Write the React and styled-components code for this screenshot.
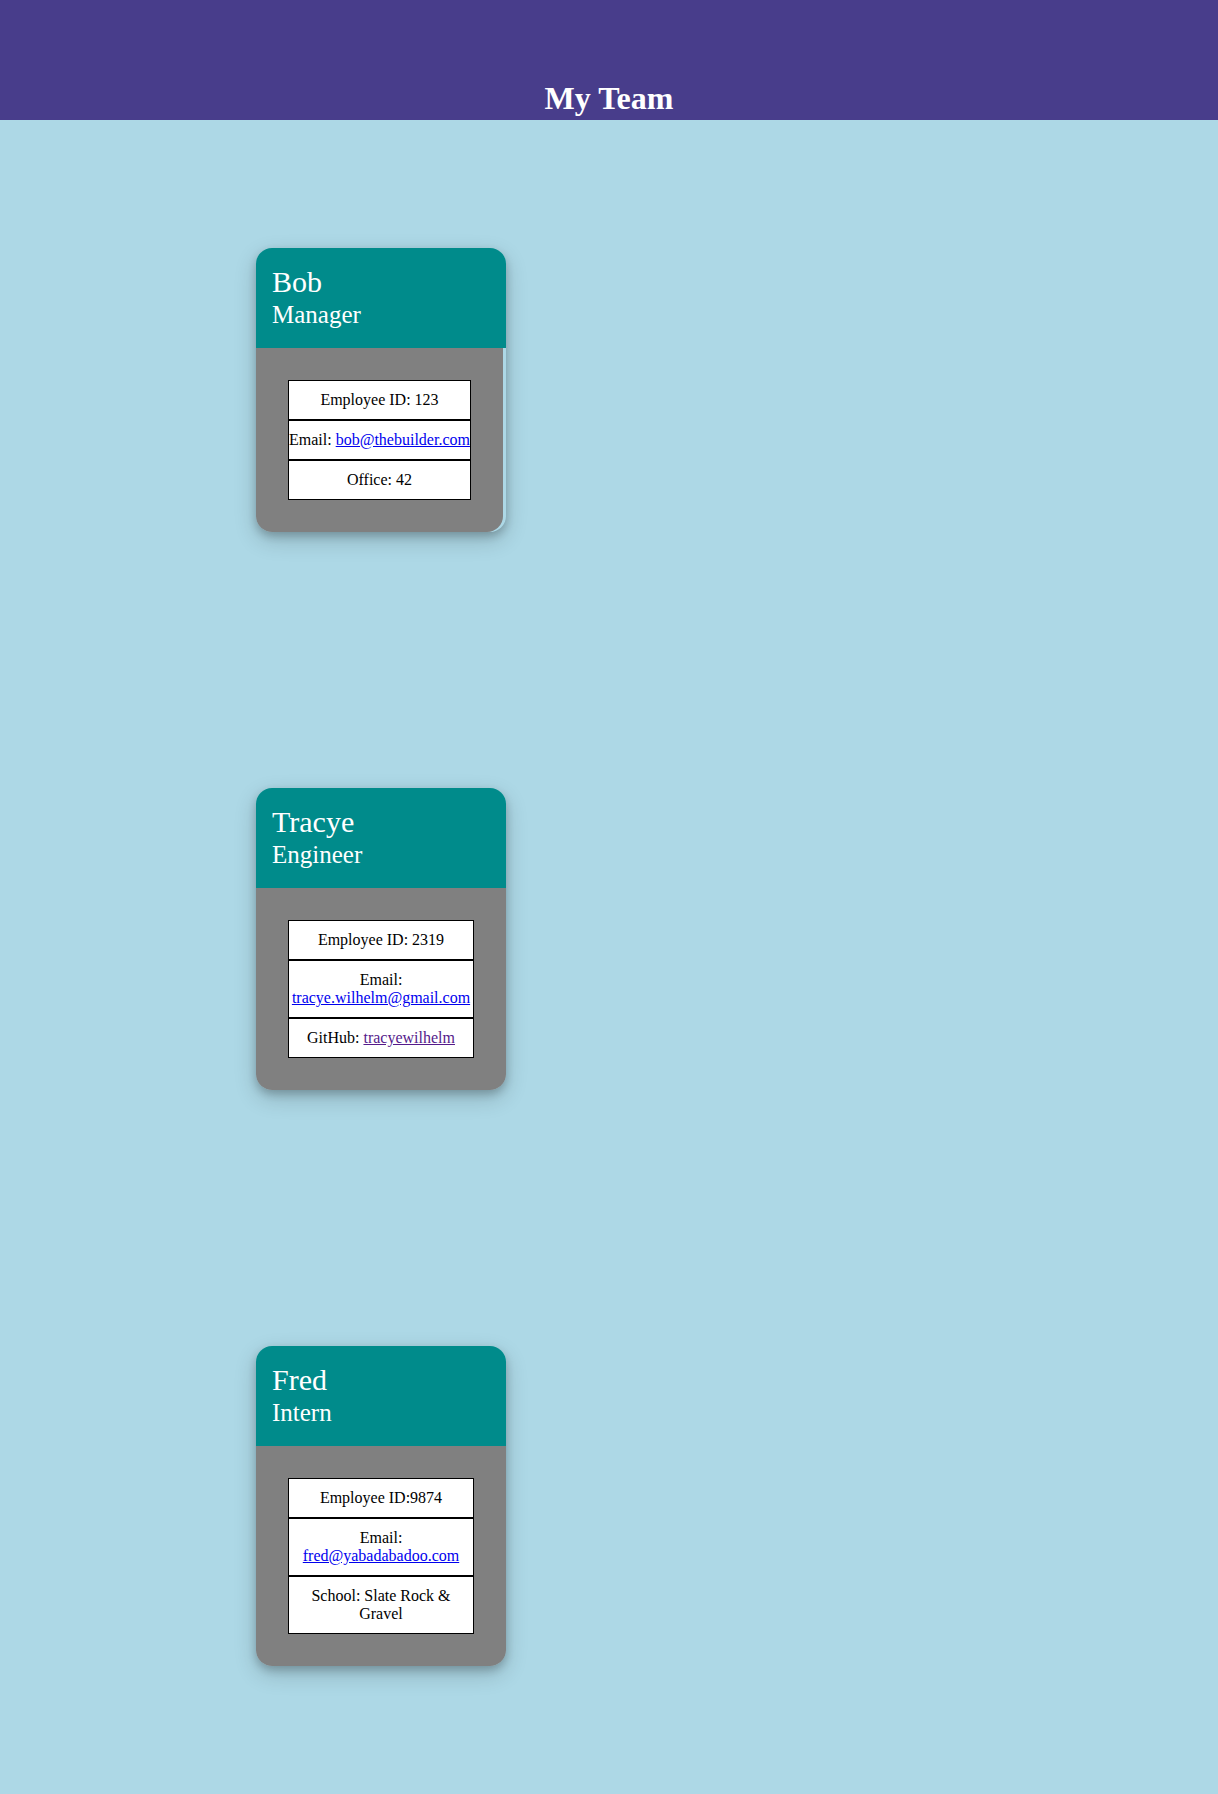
import React from "react";
import styled, { createGlobalStyle } from "styled-components";

const GlobalStyle = createGlobalStyle`
  html, body {
    margin: 0;
    padding: 0;
    background: #add8e6;
    font-family: "Liberation Serif", "Times New Roman", serif;
  }
`;

const TopBar = styled.header`
  height: 120px;
  box-sizing: border-box;
  background: #483d8b;
  display: flex;
  align-items: flex-start;
  justify-content: center;
  padding-top: 80px;
`;

const Title = styled.h1`
  margin: 0;
  color: #ffffff;
  font-size: 32px;
  font-weight: bold;
  line-height: normal;
`;

const Roster = styled.main`
  display: flex;
  flex-direction: column;
  align-items: flex-start;
  gap: 256px;
  padding: 128px 0 128px 256px;
`;

const Card = styled.section`
  width: 250px;
  border-radius: 16px;
  box-shadow: 0 4px 8px 0 rgba(0, 0, 0, 0.2), 0 8px 22px 0 rgba(0, 0, 0, 0.19);
  display: flex;
  flex-direction: column;
`;

const CardHead = styled.div`
  height: 100px;
  box-sizing: border-box;
  background: #008b8b;
  color: #ffffff;
  border-radius: 16px 16px 0 0;
  padding: 17px 16px 0 16px;
`;

const Name = styled.h2`
  margin: 0;
  font-size: 30px;
  font-weight: normal;
  line-height: normal;
`;

const Role = styled.h3`
  margin: 2px 0 0;
  font-size: 25px;
  font-weight: normal;
  line-height: normal;
`;

const CardBody = styled.div`
  background: #808080;
  border-radius: 0 0 16px 16px;
  padding: 32px;
  margin-right: ${(p) => (p.$trim ? "3px" : "0")};
`;

const InfoList = styled.ul`
  list-style: none;
  margin: 0;
  padding: 0;
`;

const InfoRow = styled.li`
  background: #ffffff;
  border: 1px solid #000000;
  padding: 10px 0;
  text-align: center;
  font-size: 16px;
  color: #000000;
`;

const Link = styled.a`
  color: ${(p) => (p.$visited ? "#551a8b" : "#0000ee")};
  text-decoration: underline;
`;

const team = [
  {
    name: "Bob",
    role: "Manager",
    trim: true,
    rows: [
      <>Employee ID: 123</>,
      <>
        Email: <Link href="#">bob@thebuilder.com</Link>
      </>,
      <>Office: 42</>,
    ],
  },
  {
    name: "Tracye",
    role: "Engineer",
    rows: [
      <>Employee ID: 2319</>,
      <>
        Email: <Link href="#">tracye.wilhelm@gmail.com</Link>
      </>,
      <>
        GitHub: <Link href="#" $visited>tracyewilhelm</Link>
      </>,
    ],
  },
  {
    name: "Fred",
    role: "Intern",
    rows: [
      <>Employee ID:9874</>,
      <>
        Email: <Link href="#">fred@yabadabadoo.com</Link>
      </>,
      <>School: Slate Rock &amp; Gravel</>,
    ],
  },
];

export default function App() {
  return (
    <>
      <GlobalStyle />
      <TopBar>
        <Title>My Team</Title>
      </TopBar>
      <Roster>
        {team.map((m) => (
          <Card key={m.name}>
            <CardHead>
              <Name>{m.name}</Name>
              <Role>{m.role}</Role>
            </CardHead>
            <CardBody $trim={m.trim}>
              <InfoList>
                {m.rows.map((r, i) => (
                  <InfoRow key={i}>{r}</InfoRow>
                ))}
              </InfoList>
            </CardBody>
          </Card>
        ))}
      </Roster>
    </>
  );
}
